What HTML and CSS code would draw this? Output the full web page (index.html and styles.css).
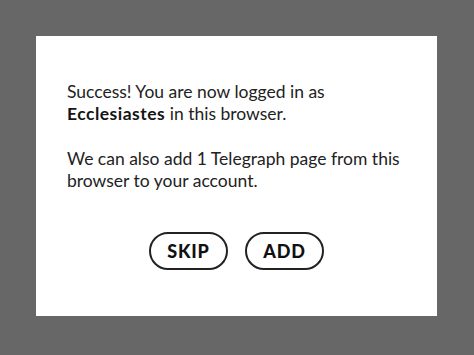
FILE: index.html
```html
<!DOCTYPE html>
<html>
<head>
<meta charset="utf-8">
<link rel="stylesheet" href="styles.css">
</head>
<body>
<div class="card">
  <p class="msg">Success! You are now logged in as <strong>Ecclesiastes</strong> in this browser.</p>
  <p class="msg second">We can also add 1 Telegraph page from this browser to your account.</p>
  <div class="actions">
    <button class="btn">SKIP</button>
    <button class="btn">ADD</button>
  </div>
</div>
</body>
</html>
```
FILE: styles.css
```css
html, body {
  margin: 0;
  height: 100%;
}
body {
  background: #676767;
  padding: 36px;
  box-sizing: border-box;
  font-family: "Lato", "Open Sans", sans-serif;
}
.card {
  width: 401px;
  height: 280px;
  box-sizing: border-box;
  background: #ffffff;
  padding: 45px 31px 0 31px;
}
.msg {
  margin: 0;
  font-size: 17.5px;
  line-height: 22px;
  color: #222;
}
.msg strong {
  font-weight: 700;
  letter-spacing: 0.5px;
  color: #151515;
}
.second {
  margin-top: 23px;
}
.actions {
  display: flex;
  justify-content: center;
  gap: 17px;
  margin-top: 40px;
}
.btn {
  width: 79px;
  height: 38px;
  box-sizing: border-box;
  border: 2px solid #222;
  border-radius: 20px;
  background: #fff;
  font-family: "Lato", "Open Sans", sans-serif;
  font-weight: 900;
  font-size: 18px;
  letter-spacing: 0.8px;
  color: #111;
  padding: 0;
  display: flex;
  align-items: center;
  justify-content: center;
}
```
